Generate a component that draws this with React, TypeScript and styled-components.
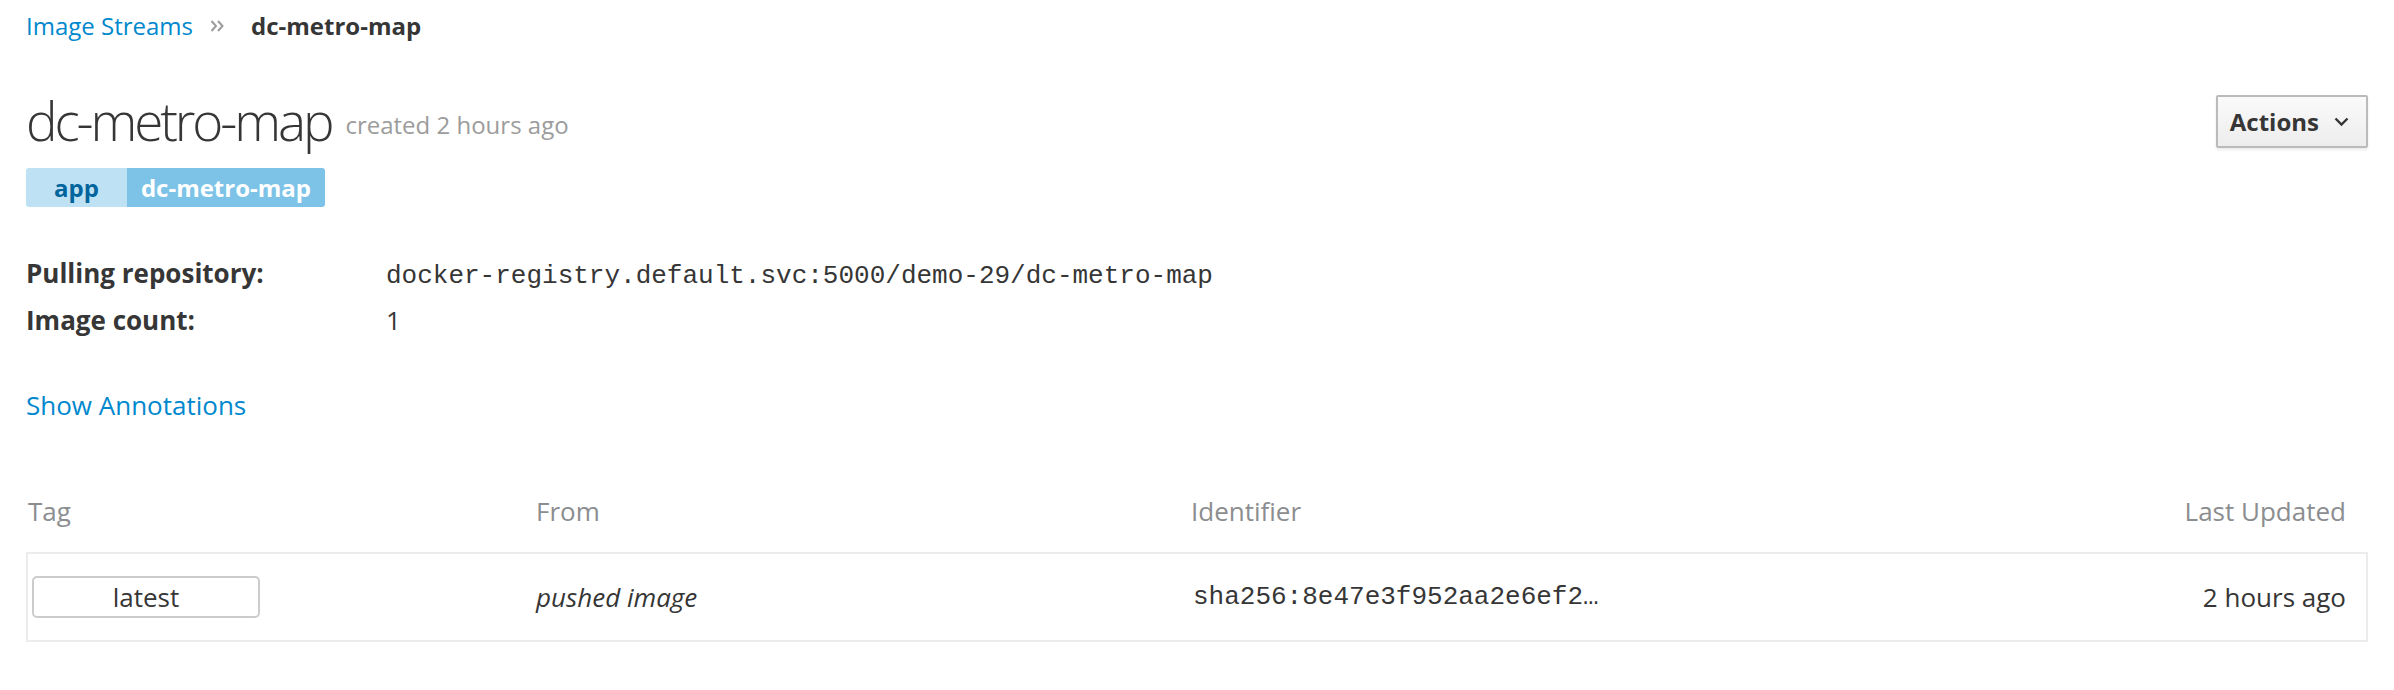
import React from "react";
import styled, { createGlobalStyle } from "styled-components";

const GlobalStyle = createGlobalStyle`
  html, body {
    margin: 0;
    padding: 0;
    background: #ffffff;
  }
  body {
    font-family: "Open Sans", "Noto Sans", sans-serif;
    color: #363636;
    font-size: 24px;
  }
`;

const Page = styled.div`
  padding: 9px 26px 0 26px;
`;

const Breadcrumb = styled.nav`
  display: flex;
  align-items: center;
  gap: 17px;
  height: 34px;
  line-height: 34px;
  font-size: 24px;
`;

const Crumb = styled.a`
  color: #0088ce;
  text-decoration: none;
`;

const Current = styled.span`
  font-weight: 700;
  color: #363636;
  margin-left: 10px;
`;

const Header = styled.div`
  display: flex;
  justify-content: space-between;
  align-items: flex-start;
  margin-top: 46px;
`;

const TitleBlock = styled.div`
  display: flex;
  align-items: flex-start;
  gap: 14px;
`;

const Title = styled.h1`
  margin: 0;
  font-size: 53px;
  font-weight: 300;
  line-height: 64px;
  letter-spacing: -3.1px;
`;

const Created = styled.small`
  margin-top: 19px;
  font-size: 24px;
  line-height: 34px;
  color: #9c9c9c;
`;

const ActionsButton = styled.button`
  display: flex;
  align-items: center;
  gap: 15px;
  margin-top: 6px;
  height: 53px;
  padding: 0 17px 0 12px;
  font-family: "Open Sans", sans-serif;
  font-size: 24px;
  font-weight: 700;
  color: #363636;
  background: linear-gradient(#fafafa, #ededed);
  border: 2px solid #bbbbbb;
  border-radius: 2px;
  box-shadow: 0 2px 3px rgba(0, 0, 0, 0.08);
`;

const Labels = styled.div`
  display: flex;
  margin-top: 15px;
`;

const LabelPart = styled.span<{ $value?: boolean }>`
  height: 39px;
  line-height: 39px;
  font-size: 24px;
  font-weight: 700;
  padding: ${(p) => (p.$value ? "0 14px" : "0 28px")};
  background: ${(p) => (p.$value ? "#7dc3e8" : "#bee1f4")};
  color: ${(p) => (p.$value ? "#ffffff" : "#00659c")};
  border-radius: ${(p) => (p.$value ? "0 3px 3px 0" : "3px 0 0 3px")};
`;

const Details = styled.dl`
  display: grid;
  grid-template-columns: 360px 1fr;
  align-items: baseline;
  grid-auto-rows: 47px;
  margin: 43px 0 0;
  line-height: 47px;
`;

const Term = styled.dt`
  font-weight: 700;
  font-size: 26px;
`;

const Desc = styled.dd<{ $mono?: boolean }>`
  margin: 0;
  font-family: ${(p) =>
    p.$mono ? `"Liberation Mono", "Courier New", monospace` : `"Open Sans", sans-serif`};
  font-size: 26px;
`;

const ShowLink = styled.a`
  display: block;
  margin-top: 44px;
  line-height: 34px;
  font-size: 26px;
  color: #0088ce;
  text-decoration: none;
`;

const Table = styled.div`
  margin-top: 69px;
  padding-bottom: 40px;
`;

const columns = `508px 655px 1fr auto`;

const HeadRow = styled.div`
  display: grid;
  grid-template-columns: ${columns};
  padding: 0 22px 0 2px;
  line-height: 40px;
  font-size: 26px;
  color: #8b8d8f;
  margin-bottom: 21px;
`;

const HeadCell = styled.div<{ $right?: boolean }>`
  text-align: ${(p) => (p.$right ? "right" : "left")};
`;

const BodyRow = styled.div`
  display: grid;
  grid-template-columns: ${columns};
  align-items: center;
  height: 86px;
  padding: 0 20px 0 0;
  border: 2px solid #ececec;
  font-size: 26px;
`;

const Cell = styled.div<{ $italic?: boolean; $mono?: boolean; $right?: boolean }>`
  font-style: ${(p) => (p.$italic ? "italic" : "normal")};
  font-family: ${(p) =>
    p.$mono ? `"Liberation Mono", "Courier New", monospace` : `"Open Sans", sans-serif`};
  text-align: ${(p) => (p.$right ? "right" : "left")};
  padding-left: ${(p) => (p.$mono ? "2px" : "0")};
`;

const TagButton = styled.div`
  width: 224px;
  height: 38px;
  margin-left: 4px;
  line-height: 38px;
  text-align: center;
  border: 2px solid #cccccc;
  border-radius: 5px;
  font-size: 26px;
`;

const DoubleAngle = () => (
  <svg width="14" height="12" viewBox="0 0 14 12" fill="none">
    <polyline points="1.5,1 6,6 1.5,11" stroke="#9c9c9c" strokeWidth="2" />
    <polyline points="8,1 12.5,6 8,11" stroke="#9c9c9c" strokeWidth="2" />
  </svg>
);

const Chevron = () => (
  <svg width="15" height="10" viewBox="0 0 15 10" fill="none">
    <polyline points="1.5,1.5 7.5,7.5 13.5,1.5" stroke="#363636" strokeWidth="2.4" />
  </svg>
);

export default function App() {
  return (
    <>
      <GlobalStyle />
      <Page>
        <Breadcrumb>
          <Crumb href="#">Image Streams</Crumb>
          <DoubleAngle />
          <Current>dc-metro-map</Current>
        </Breadcrumb>

        <Header>
          <TitleBlock>
            <Title>dc-metro-map</Title>
            <Created>created 2 hours ago</Created>
          </TitleBlock>
          <ActionsButton>
            Actions
            <Chevron />
          </ActionsButton>
        </Header>

        <Labels>
          <LabelPart>app</LabelPart>
          <LabelPart $value>dc-metro-map</LabelPart>
        </Labels>

        <Details>
          <Term>Pulling repository:</Term>
          <Desc $mono>docker-registry.default.svc:5000/demo-29/dc-metro-map</Desc>
          <Term>Image count:</Term>
          <Desc>1</Desc>
        </Details>

        <ShowLink href="#">Show Annotations</ShowLink>

        <Table>
          <HeadRow>
            <HeadCell>Tag</HeadCell>
            <HeadCell>From</HeadCell>
            <HeadCell>Identifier</HeadCell>
            <HeadCell $right>Last Updated</HeadCell>
          </HeadRow>
          <BodyRow>
            <Cell>
              <TagButton>latest</TagButton>
            </Cell>
            <Cell $italic>pushed image</Cell>
            <Cell $mono>sha256:8e47e3f952aa2e6ef2…</Cell>
            <Cell $right>2 hours ago</Cell>
          </BodyRow>
        </Table>
      </Page>
    </>
  );
}
